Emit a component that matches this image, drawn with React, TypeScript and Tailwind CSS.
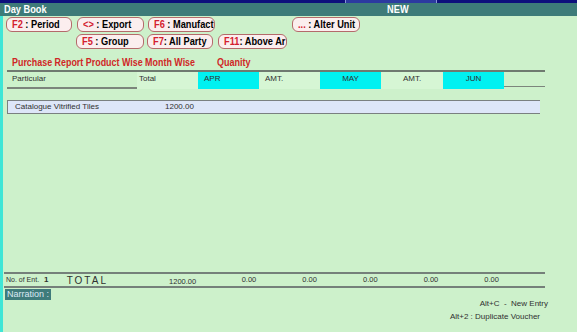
import React from "react";

type BtnProps = {
  k: string;
  label: string;
  w: string;
  ml: string;
};

// narrow text, the reference's font is squeezed sideways
const N = ({ children, className = "" }: { children: React.ReactNode; className?: string }) => (
  <span className={`inline-block whitespace-nowrap origin-left scale-x-[0.84] ${className}`}>{children}</span>
);

const Btn = ({ k, label, w, ml }: BtnProps) => (
  <div
    className={`${w} ${ml} h-[15px] shrink-0 overflow-hidden whitespace-nowrap rounded-[6px] border border-[#b46a6a] bg-[#fbeeee] px-[5px] text-[11px] font-bold leading-[13px] text-black`}
  >
    <N>
      <span className="text-[#d4202e]">{k}</span>
      {label}
    </N>
  </div>
);

const months = ["APR", "MAY", "JUN"];
const amounts = ["0.00", "0.00", "0.00", "0.00", "0.00"];

export default function App() {
  return (
    <div
      className="relative flex h-[332px] w-[577px] flex-col overflow-hidden bg-[#cdf1cb]"
      style={{ fontFamily: '"Liberation Sans", Arial, sans-serif' }}
    >
      {/* top strip */}
      <div className="flex h-[3px] shrink-0 bg-[#0d0f7c]">
        <div className="w-[345px]" />
        <div className="w-[92px] border-x border-[#8a94d8] bg-[#2c3aa0]" />
      </div>

      {/* title bar */}
      <div className="flex h-[13px] shrink-0 items-center bg-[#3d7b79] text-[11px] font-bold leading-[13px] text-white">
        <div className="w-[368px] pl-[4px]">
          <N>Day Book</N>
        </div>
        <div className="w-[60px] text-center">
          <span className="inline-block origin-center scale-x-[0.84]">NEW</span>
        </div>
      </div>

      <div className="flex flex-1">
        {/* left strip */}
        <div className="w-[3px] shrink-0 bg-[#3fe6d6]" />

        <div className="flex flex-1 flex-col">
          {/* buttons */}
          <div className="mt-[1px] flex">
            <Btn k="F2" label=" : Period" w="w-[66px]" ml="ml-[3px]" />
            <Btn k="<>" label=" : Export" w="w-[67px]" ml="ml-[5px]" />
            <Btn k="F6" label=" : Manufactu" w="w-[67px]" ml="ml-[4px]" />
            <Btn k=" ... " label=": Alter Unit" w="w-[68px]" ml="ml-[77px]" />
          </div>
          <div className="mt-[2px] flex">
            <Btn k="F5" label=" : Group" w="w-[68px]" ml="ml-[73px]" />
            <Btn k="F7" label=": All Party" w="w-[66px]" ml="ml-[3px]" />
            <Btn k="F11" label=": Above Ar" w="w-[69px]" ml="ml-[5px]" />
          </div>

          {/* report title */}
          <div className="mt-[7px] flex text-[11px] font-bold leading-[12px] text-[#d02626]">
            <div className="w-[214px] pl-[9px]">
              <span className="inline-block origin-left scale-x-[0.81] whitespace-nowrap">
                Purchase Report Product Wise Month Wise
              </span>
            </div>
            <span className="inline-block origin-left scale-x-[0.82]">Quanity</span>
          </div>

          {/* table header */}
          <div className="ml-[4px] mt-[2px] w-[538px] border-t-2 border-[#6f7a70]">
            <div className="flex h-[17px] text-[8px] leading-[14px] text-[#303030]">
              <div className="w-[130px] border-b-2 border-[#7c857c] pl-[5px]">Particular</div>
              <div className="w-[61px] bg-[#d6f6d4] pl-[2px]">Total</div>
              <div className="w-[61px] bg-[#00f1f1] pl-[6px]">{months[0]}</div>
              <div className="w-[61px] bg-[#d6f6d4] pl-[6px]">AMT.</div>
              <div className="w-[61px] bg-[#00f1f1] text-center">{months[1]}</div>
              <div className="w-[62px] bg-[#d6f6d4] text-center">AMT.</div>
              <div className="w-[61px] bg-[#00f1f1] text-center">{months[2]}</div>
              <div className="h-[15px] flex-1 border-b border-[#7c857c]" />
            </div>
          </div>

          {/* data row */}
          <div className="ml-[4px] mt-[11px] flex h-[14px] w-[533px] border-y border-l border-[#7a8080] bg-[#dde6f8] text-[8px] leading-[12px] text-[#303030]">
            <div className="w-[157px] pl-[7px]">Catalogue Vitrified Tiles</div>
            <div>1200.00</div>
          </div>

          <div className="flex-1" />

          {/* totals */}
          <div className="ml-[1px] flex h-[16px] w-[541px] items-center border-y-2 border-[#75807a] text-[#303030]">
            <div className="w-[63px] pl-[2px] text-[7px]">
              No. of Ent. <span className="ml-[3px] text-[8px] font-bold">1</span>
            </div>
            <div className="w-[103px] text-[10px] tracking-[2px]">TOTAL</div>
            <div className="mt-[4px] w-[73px] text-[7.5px]">1200.00</div>
            {amounts.map((a, i) => (
              <div key={i} className="w-[61px] text-[7.5px]">
                {a}
              </div>
            ))}
          </div>

          <div className="ml-[2px] mt-[1px] flex">
            <div className="h-[11px] bg-[#3f7b7b] px-[2px] text-[9px] leading-[11px] text-[#dce9f4]">
              Narration :
            </div>
          </div>

          {/* shortcuts */}
          <div className="mb-[9px] mr-[37px] mt-[-3px] flex flex-col items-end text-[8px] leading-[13px] text-[#303030]">
            <div className="mr-[-8px]">Alt+C&nbsp;&nbsp;-&nbsp;&nbsp;New Entry</div>
            <div>Alt+2 : Duplicate Voucher</div>
          </div>
        </div>
      </div>
    </div>
  );
}
